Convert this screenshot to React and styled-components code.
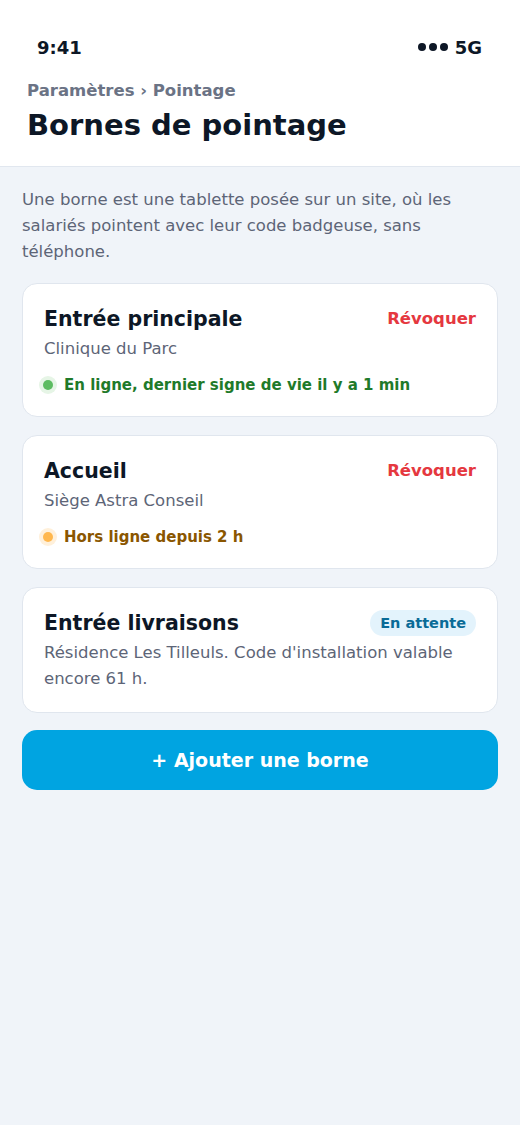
import React from 'react';
import styled, { createGlobalStyle } from 'styled-components';

const GlobalStyle = createGlobalStyle`
  * { box-sizing: border-box; }
  html, body {
    margin: 0;
    padding: 0;
    background: #f0f4f9;
    font-family: "DejaVu Sans", Inter, sans-serif;
    -webkit-font-smoothing: antialiased;
  }
`;

const Screen = styled.div`
  min-height: 1125px;
  background: #f0f4f9;
`;

const Header = styled.header`
  background: #fff;
  border-bottom: 1px solid #e1e7ef;
  padding: 0 27px;
  height: 167px;
`;

const StatusBar = styled.div`
  display: flex;
  justify-content: space-between;
  align-items: center;
  height: 72px;
  padding: 22px 11px 0 10px;
  font-size: 18px;
  font-weight: 700;
  color: #0d1726;
`;

const Signal = styled.span`
  display: flex;
  align-items: center;
  gap: 7px;
`;

const Dots = styled.span`
  display: flex;
  gap: 3px;
  span {
    width: 8px;
    height: 8px;
    border-radius: 50%;
    background: #0d1726;
  }
`;

const Breadcrumb = styled.div`
  font-size: 16.5px;
  font-weight: 600;
  color: #6b7385;
  margin-top: 8px;
  line-height: 22px;
`;

const Title = styled.h1`
  margin: 5px 0 0;
  font-size: 29px;
  font-weight: 800;
  color: #0d1726;
  line-height: 36px;
`;

const Content = styled.main`
  padding: 20px 22px;
  display: flex;
  flex-direction: column;
  gap: 18px;
`;

const Intro = styled.p`
  margin: 0;
  font-size: 16.5px;
  line-height: 26px;
  color: #5d6577;
`;

const Card = styled.section`
  background: #fff;
  border: 1px solid #e0e6ee;
  border-radius: 15px;
  padding: 20px 21px 20px;
`;

const CardHead = styled.div`
  display: flex;
  justify-content: space-between;
  align-items: center;
  height: 30px;
`;

const CardTitle = styled.h2`
  margin: 0;
  font-size: 20.5px;
  line-height: 26px;
  font-weight: 800;
  color: #0d1726;
`;

const Revoke = styled.button`
  border: 0;
  background: none;
  padding: 0;
  font-family: inherit;
  font-size: 16.5px;
  line-height: 22px;
  font-weight: 700;
  color: #e5383f;
`;

const Badge = styled.span`
  background: #e3f3fc;
  color: #0a6b97;
  font-size: 14.5px;
  font-weight: 700;
  padding: 4px 10px;
  border-radius: 13px;
  line-height: 18px;
`;

const Sub = styled.p`
  margin: 2px 0 0;
  font-size: 16.5px;
  line-height: 26px;
  color: #5d6577;
`;

const Status = styled.div`
  display: flex;
  align-items: center;
  gap: 7px;
  height: 18px;
  margin: 14px 0 2px -5px;
  font-size: 15px;
  line-height: 18px;
  font-weight: 700;
  color: ${(p) => p.$text};
`;

const Dot = styled.span`
  width: 10px;
  height: 10px;
  border-radius: 50%;
  margin: 4px;
  background: ${(p) => p.$color};
  box-shadow: 0 0 0 4px ${(p) => p.$halo};
`;

const AddButton = styled.button`
  height: 60px;
  border: 0;
  border-radius: 15px;
  background: #00a4e1;
  color: #fff;
  font-family: inherit;
  font-size: 19px;
  font-weight: 700;
  margin-top: -1px;
`;

const STATUS = {
  online: { color: '#5cbc61', halo: '#e6f5e6', text: '#1f7a2a' },
  offline: { color: '#ffb74d', halo: '#fff0da', text: '#8a5600' },
};

const terminals = [
  {
    name: 'Entrée principale',
    site: 'Clinique du Parc',
    status: 'online',
    label: 'En ligne, dernier signe de vie il y a 1 min',
  },
  {
    name: 'Accueil',
    site: 'Siège Astra Conseil',
    status: 'offline',
    label: 'Hors ligne depuis 2 h',
  },
  {
    name: 'Entrée livraisons',
    site: "Résidence Les Tilleuls. Code d'installation valable encore 61 h.",
    pending: true,
  },
];

export default function App() {
  return (
    <Screen>
      <GlobalStyle />
      <Header>
        <StatusBar>
          <span>9:41</span>
          <Signal>
            <Dots><span /><span /><span /></Dots>
            5G
          </Signal>
        </StatusBar>
        <Breadcrumb>Paramètres › Pointage</Breadcrumb>
        <Title>Bornes de pointage</Title>
      </Header>
      <Content>
        <Intro>
          Une borne est une tablette posée sur un site, où les salariés pointent avec leur code
          badgeuse, sans téléphone.
        </Intro>
        {terminals.map((t) => {
          const s = STATUS[t.status];
          return (
            <Card key={t.name}>
              <CardHead>
                <CardTitle>{t.name}</CardTitle>
                {t.pending ? <Badge>En attente</Badge> : <Revoke>Révoquer</Revoke>}
              </CardHead>
              <Sub>{t.site}</Sub>
              {s && (
                <Status $text={s.text}>
                  <Dot $color={s.color} $halo={s.halo} />
                  {t.label}
                </Status>
              )}
            </Card>
          );
        })}
        <AddButton>+ Ajouter une borne</AddButton>
      </Content>
    </Screen>
  );
}
